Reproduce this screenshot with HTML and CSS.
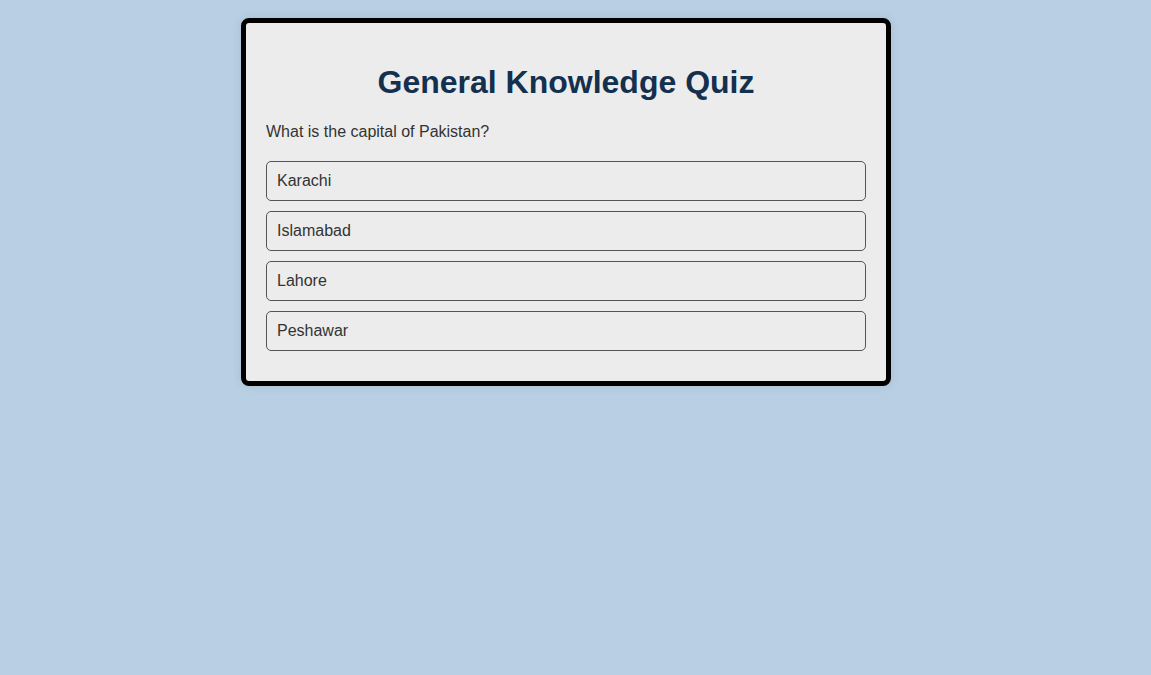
FILE: index.html
```html
<!DOCTYPE html>
<html lang="en">
<head>
<meta charset="utf-8">
<title>General Knowledge Quiz</title>
<link rel="stylesheet" href="styles.css">
</head>
<body>
<div class="quiz">
  <h1 class="quiz-title">General Knowledge Quiz</h1>
  <p class="quiz-question">What is the capital of Pakistan?</p>
  <div class="options">
    <button class="option">Karachi</button>
    <button class="option">Islamabad</button>
    <button class="option">Lahore</button>
    <button class="option">Peshawar</button>
  </div>
</div>
</body>
</html>
```
FILE: styles.css
```css
html, body {
  margin: 0;
  padding: 0;
}
body {
  background: #b9d0e4;
  font-family: "Liberation Sans", Arial, sans-serif;
  padding: 18px 19px 0 0;
  min-height: 100vh;
  box-sizing: border-box;
}
.quiz {
  width: 650px;
  box-sizing: border-box;
  margin: 0 auto;
  background: #ececec;
  border: 5px solid #000;
  border-radius: 8px;
  padding: 20px;
  box-shadow: 0 0 10px rgba(0, 0, 0, 0.1);
}
.quiz-title {
  margin: 21px 0 0;
  font-size: 32px;
  line-height: 37px;
  text-align: center;
  color: #14304f;
  font-weight: bold;
}
.quiz-question {
  margin: 22px 0 0;
  font-size: 16px;
  line-height: 18px;
  color: #333;
}
.options {
  display: flex;
  flex-direction: column;
  gap: 10px;
  margin-top: 20px;
  margin-bottom: 10px;
}
.option {
  display: block;
  width: 100%;
  height: 40px;
  box-sizing: border-box;
  text-align: left;
  padding: 0 10px;
  font-family: inherit;
  font-size: 16px;
  color: #333;
  background: #ececec;
  border: 1px solid #555;
  border-radius: 5px;
}
```
